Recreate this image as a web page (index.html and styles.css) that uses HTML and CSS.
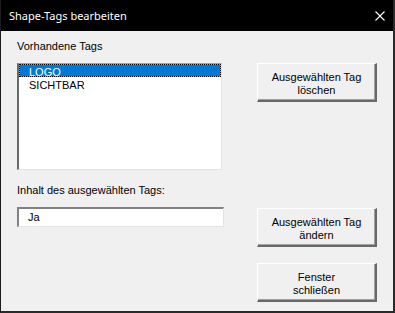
FILE: index.html
```html
<!DOCTYPE html>
<html lang="de">
<head>
<meta charset="utf-8">
<title>Shape-Tags bearbeiten</title>
<link rel="stylesheet" href="styles.css">
</head>
<body>
<div class="window">
  <div class="titlebar">
    <span class="title">Shape-Tags bearbeiten</span>
    <svg class="close" width="10" height="10" viewBox="0 0 10 10"><path d="M0.5 0.5 L9.5 9.5 M9.5 0.5 L0.5 9.5" stroke="#fff" stroke-width="1.1" fill="none"/></svg>
  </div>
  <div class="content">
    <div class="left">
      <div class="label">Vorhandene Tags</div>
      <div class="listbox">
        <div class="item selected">LOGO</div>
        <div class="item">SICHTBAR</div>
      </div>
      <div class="label label2">Inhalt des ausgewählten Tags:</div>
      <div class="textbox">Ja</div>
    </div>
    <div class="right">
      <div class="button b1">Ausgewählten Tag<br>löschen</div>
      <div class="button b2">Ausgewählten Tag<br>ändern</div>
      <div class="button b3">Fenster<br>schließen</div>
    </div>
  </div>
</div>
</body>
</html>
```
FILE: styles.css
```css
html, body {
  margin: 0;
  padding: 0;
  background: #f0f0f0;
}
.window {
  width: 395px;
  height: 313px;
  box-sizing: border-box;
  border-left: 1px solid #1c1c1c;
  border-right: 2px solid #2b2b2b;
  border-bottom: 2px solid #2b2b2b;
  background: #f0f0f0;
  display: flex;
  flex-direction: column;
  font-family: "Liberation Sans", Arial, sans-serif;
  font-size: 11px;
  color: #000;
}
.titlebar {
  height: 31px;
  flex: none;
  background: #000;
  display: flex;
  align-items: center;
  justify-content: space-between;
  padding: 0 8px 0 8px;
}
.title {
  font-family: "Noto Sans", sans-serif;
  font-size: 11px;
  line-height: 15px;
  color: #fff;
}
.close {
  display: block;
  margin-right: 0;
}
.content {
  display: flex;
  padding: 9px 0 0 16px;
  gap: 33px;
}
.left {
  width: 207px;
  display: flex;
  flex-direction: column;
}
.label {
  line-height: 13px;
  height: 13px;
}
.listbox {
  margin-top: 10px;
  width: 205px;
  height: 107px;
  box-sizing: border-box;
  background: #fff;
  border-style: solid;
  border-width: 1px 1px 1px 2px;
  border-color: #a0a0a0 #e3e3e3 #e3e3e3 #696969;
}
.item {
  height: 13px;
  box-sizing: border-box;
  padding: 2px 0 0 9px;
  line-height: 10px;
  border: 1px solid transparent;
}
.item.selected {
  color: #fff;
  border: 1px dotted #000;
  background: linear-gradient(#0078d7, #0078d7) padding-box, #ff8728;
}
.label2 {
  margin-top: 14px;
}
.textbox {
  margin-top: 10px;
  width: 207px;
  height: 20px;
  box-sizing: border-box;
  background: #fff;
  border-style: solid;
  border-width: 2px 1px 1px 2px;
  border-color: #828282 #e3e3e3 #e3e3e3 #828282;
  padding: 2px 0 0 9px;
  line-height: 13px;
}
.right {
  display: flex;
  flex-direction: column;
  padding-top: 23px;
}
.button {
  width: 120px;
  height: 39px;
  box-sizing: border-box;
  border-style: solid;
  border-width: 1px 2px 2px 1px;
  border-color: #fff #696969 #696969 #fff;
  box-shadow: inset -1px -1px 0 #a0a0a0;
  background: #f0f0f0;
  display: flex;
  align-items: center;
  justify-content: center;
  text-align: center;
  line-height: 13px;
  padding-top: 3px;
}
.b2 {
  margin-top: 106px;
}
.b3 {
  margin-top: 16px;
}
```
